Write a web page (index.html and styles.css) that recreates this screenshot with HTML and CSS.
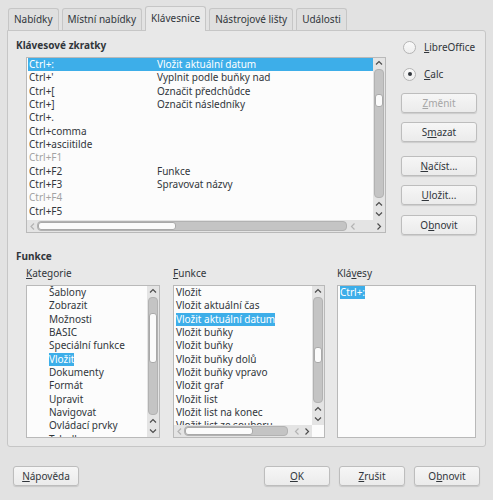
FILE: index.html
```html
<!DOCTYPE html>
<html lang="cs">
<head>
<meta charset="utf-8">
<title>Přizpůsobit</title>
<link rel="stylesheet" href="styles.css">
</head>
<body>
<div class="dialog">
  <div class="tabs">
    <div class="tab">Nabídky</div>
    <div class="tab">Místní nabídky</div>
    <div class="tab active">Klávesnice</div>
    <div class="tab">Nástrojové lišty</div>
    <div class="tab">Události</div>
  </div>
  <div class="panel">
    <div class="top">
      <div class="left">
        <div class="heading">Klávesové zkratky</div>
        <div class="list shortcuts">
          <div class="rows">
            <div class="row sel"><span class="c1">Ctrl+:</span><span>Vložit aktuální datum</span></div>
            <div class="row"><span class="c1">Ctrl+'</span><span>Vyplnit podle buňky nad</span></div>
            <div class="row"><span class="c1">Ctrl+[</span><span>Označit předchůdce</span></div>
            <div class="row"><span class="c1">Ctrl+]</span><span>Označit následníky</span></div>
            <div class="row"><span class="c1">Ctrl+.</span><span></span></div>
            <div class="row"><span class="c1">Ctrl+comma</span><span></span></div>
            <div class="row"><span class="c1">Ctrl+asciitilde</span><span></span></div>
            <div class="row dim"><span class="c1">Ctrl+F1</span><span></span></div>
            <div class="row"><span class="c1">Ctrl+F2</span><span>Funkce</span></div>
            <div class="row"><span class="c1">Ctrl+F3</span><span>Spravovat názvy</span></div>
            <div class="row dim"><span class="c1">Ctrl+F4</span><span></span></div>
            <div class="row"><span class="c1">Ctrl+F5</span><span></span></div>
            <div class="row dim"><span class="c1">Ctrl+F6</span><span></span></div>
          </div>
          <div class="vscroll">
            <svg class="arr" width="12" height="10" viewBox="0 0 12 10"><polyline points="3,6.5 6,3.5 9,6.5" /></svg>
            <div class="track"><div class="thumb" style="margin-top:24px;height:13px"></div></div>
            <svg class="arr" width="12" height="10" viewBox="0 0 12 10"><polyline points="3,6.5 6,3.5 9,6.5" /></svg>
            <svg class="arr" width="12" height="10" viewBox="0 0 12 10"><polyline points="3,3.5 6,6.5 9,3.5" /></svg>
          </div>
          <div class="hscroll">
            <svg class="arr light" width="9" height="11" viewBox="0 0 9 11"><polyline points="6,2.5 3,5.5 6,8.5" /></svg>
            <div class="htrack"><div class="hthumb" style="width:138px"></div></div>
            <svg class="arr light" width="12" height="11" viewBox="0 0 12 11"><polyline points="7.5,2.5 4.5,5.5 7.5,8.5" /></svg>
            <span class="hsp"></span>
            <svg class="arr" width="12" height="11" viewBox="0 0 12 11"><polyline points="4.5,2.5 7.5,5.5 4.5,8.5" /></svg>
          </div>
        </div>
      </div>
      <div class="right">
        <label class="radio"><span class="circle"></span><span><u>L</u>ibreOffice</span></label>
        <label class="radio second"><span class="circle on"></span><span><u>C</u>alc</span></label>
        <div class="btn disabled first"><u>Z</u>měnit</div>
        <div class="btn g9">S<u>m</u>azat</div>
        <div class="btn g14"><u>N</u>ačíst...</div>
        <div class="btn g9"><u>U</u>ložit...</div>
        <div class="btn g10">O<u>b</u>novit</div>
      </div>
    </div>

    <div class="heading fn">Funkce</div>
    <div class="cols">
      <div class="col c-cat">
        <div class="label"><u>K</u>ategorie</div>
        <div class="list small nohs">
          <div class="rows indent">
            <div class="row"><span>Šablony</span></div>
            <div class="row"><span>Zobrazit</span></div>
            <div class="row"><span>Možnosti</span></div>
            <div class="row"><span>BASIC</span></div>
            <div class="row"><span>Speciální funkce</span></div>
            <div class="row"><span class="hl">Vložit</span></div>
            <div class="row"><span>Dokumenty</span></div>
            <div class="row"><span>Formát</span></div>
            <div class="row"><span>Upravit</span></div>
            <div class="row"><span>Navigovat</span></div>
            <div class="row"><span>Ovládací prvky</span></div>
            <div class="row"><span>Tabulka</span></div>
          </div>
          <div class="vscroll">
            <svg class="arr" width="12" height="10" viewBox="0 0 12 10"><polyline points="3,6.5 6,3.5 9,6.5" /></svg>
            <div class="track"><div class="thumb" style="margin-top:15px;height:50px"></div></div>
            <svg class="arr" width="12" height="10" viewBox="0 0 12 10"><polyline points="3,6.5 6,3.5 9,6.5" /></svg>
            <svg class="arr" width="12" height="10" viewBox="0 0 12 10"><polyline points="3,3.5 6,6.5 9,3.5" /></svg>
          </div>
        </div>
      </div>
      <div class="col c-fn">
        <div class="label"><u>F</u>unkce</div>
        <div class="list small">
          <div class="rows">
            <div class="row"><span>Vložit</span></div>
            <div class="row"><span>Vložit aktuální čas</span></div>
            <div class="row"><span class="hl">Vložit aktuální datum</span></div>
            <div class="row"><span>Vložit buňky</span></div>
            <div class="row"><span>Vložit buňky</span></div>
            <div class="row"><span>Vložit buňky dolů</span></div>
            <div class="row"><span>Vložit buňky vpravo</span></div>
            <div class="row"><span>Vložit graf</span></div>
            <div class="row"><span>Vložit list</span></div>
            <div class="row"><span>Vložit list na konec</span></div>
            <div class="row"><span>Vložit list ze souboru</span></div>
          </div>
          <div class="vscroll">
            <svg class="arr" width="12" height="10" viewBox="0 0 12 10"><polyline points="3,6.5 6,3.5 9,6.5" /></svg>
            <div class="track"><div class="thumb" style="margin-top:49px;height:16px"></div></div>
            <svg class="arr" width="12" height="10" viewBox="0 0 12 10"><polyline points="3,6.5 6,3.5 9,6.5" /></svg>
            <svg class="arr" width="12" height="10" viewBox="0 0 12 10"><polyline points="3,3.5 6,6.5 9,3.5" /></svg>
          </div>
          <div class="hscroll">
            <svg class="arr light" width="9" height="11" viewBox="0 0 9 11"><polyline points="6,2.5 3,5.5 6,8.5" /></svg>
            <div class="htrack"><div class="hthumb" style="width:68px"></div></div>
            <svg class="arr light" width="10" height="11" viewBox="0 0 10 11"><polyline points="6.5,2.5 3.5,5.5 6.5,8.5" /></svg>
            <svg class="arr" width="10" height="11" viewBox="0 0 10 11"><polyline points="3.5,2.5 6.5,5.5 3.5,8.5" /></svg>
            <span class="corner"></span>
          </div>
        </div>
      </div>
      <div class="col c-keys">
        <div class="label">Klá<u>v</u>esy</div>
        <div class="list small plain">
          <div class="rows">
            <div class="row"><span class="hl">Ctrl+:</span></div>
          </div>
        </div>
      </div>
    </div>
  </div>
  <div class="footer">
    <div class="btn fbtn"><u>N</u>ápověda</div>
    <span class="spacer"></span>
    <div class="btn fbtn"><u>O</u>K</div>
    <div class="btn fbtn"><u>Z</u>rušit</div>
    <div class="btn fbtn">O<u>b</u>novit</div>
  </div>
</div>
</body>
</html>
```

FILE: styles.css
```css
* { box-sizing: border-box; }

body {
  margin: 0;
  width: 493px;
  height: 500px;
  overflow: hidden;
  background: #e2e2e2;
  font-family: "Noto Sans", "DejaVu Sans", sans-serif;
  font-size: 10px;
  color: #31363b;
}

u { text-decoration: underline; text-underline-offset: 1px; }

.dialog { padding: 6px 0 0 7px; }

/* tabs */
.tabs {
  display: flex;
  align-items: flex-end;
  height: 24px;
  margin-left: 1px;
  gap: 3px;
  position: relative;
  z-index: 1;
}
.tab {
  height: 22px;
  line-height: 21px;
  padding: 0 5px;
  border: 1px solid #c6c6c6;
  border-bottom: none;
  border-radius: 3px 3px 0 0;
  background: #dfdfdf;
  white-space: nowrap;
}
.tab.active {
  height: 25px;
  line-height: 23px;
  margin-bottom: -1px;
  background: #e8e8e8;
}

/* panel */
.panel {
  width: 479px;
  height: 417px;
  border: 1px solid #c6c6c6;
  border-radius: 0 3px 3px 3px;
  background: #e8e8e8;
  padding: 0 0 0 0;
}

.top { display: flex; }
.left { padding-left: 8px; }
.heading {
  font-weight: bold;
  line-height: 16px;
  height: 16px;
  margin-top: 6px;
  white-space: nowrap;
}
.heading.fn { margin: 13px 0 0 8px; }

/* lists */
.list {
  border: 1px solid #b9b9b9;
  background: #fcfcfc;
  display: grid;
  grid-template-columns: 1fr 12px;
  grid-template-rows: 1fr 12px;
  overflow: hidden;
}
.list.shortcuts {
  width: 360px;
  height: 176px;
  margin: 4px 0 0 10px;
}
.rows { overflow: hidden; padding-left: 1px; }
.row {
  height: 13.33px;
  line-height: 13.33px;
  display: flex;
  white-space: nowrap;
  padding-left: 1px;
}
.row .c1 { width: 128px; flex: none; }
.row.sel { background: #3daee9; color: #fff; }
.row.dim { color: #a3a3a3; }
.indent .row { padding-left: 21px; }
.hl { background: #3daee9; color: #fff; }

/* scrollbars */
.vscroll {
  display: flex;
  flex-direction: column;
  align-items: center;
  background: #e4e4e4;
  padding-bottom: 1px;
}
.arr { flex: none; fill: none; stroke: #4d4d4d; stroke-width: 1.2; }
.arr.light { stroke: #b4b4b4; }
.track {
  flex: 1;
  width: 10px;
  margin: 1px 0;
  background: #c4c4c4;
  border: 1px solid #b2b2b2;
  border-radius: 4px;
  display: flex;
  flex-direction: column;
}
.thumb {
  width: 8px;
  background: #fbfbfb;
  border: 1px solid #a9a9a9;
  border-radius: 3px;
}
.hscroll {
  grid-column: 1 / 3;
  display: flex;
  align-items: center;
  background: #e4e4e4;
  padding-left: 1px;
}
.htrack {
  flex: 1;
  height: 10px;
  background: #c4c4c4;
  border: 1px solid #b2b2b2;
  border-radius: 4px;
  display: flex;
}
.hthumb {
  height: 8px;
  background: #fbfbfb;
  border: 1px solid #a9a9a9;
  border-radius: 3px;
}
.hsp { width: 14px; flex: none; }
.corner { width: 12px; flex: none; align-self: stretch; background: #fcfcfc; }

/* right column */
.right {
  width: 76px;
  margin-left: 15px;
  padding-top: 8px;
  display: flex;
  flex-direction: column;
}
.radio {
  display: flex;
  align-items: center;
  height: 16px;
  margin-left: 2px;
  white-space: nowrap;
}
.radio.second { margin-top: 11px; }
.circle {
  width: 13px;
  height: 13px;
  border-radius: 50%;
  border: 1px solid #b5b5b5;
  background: linear-gradient(#fafafa, #eeeeee);
  margin-right: 8px;
  display: flex;
  align-items: center;
  justify-content: center;
  flex: none;
}
.circle.on::after {
  content: "";
  width: 4px;
  height: 4px;
  border-radius: 50%;
  background: #31363b;
}

.btn {
  height: 20px;
  line-height: 18px;
  text-align: center;
  border: 1px solid #bdbdbd;
  border-radius: 3px;
  background: linear-gradient(#f6f6f6, #ebebeb);
  box-shadow: 0 1px 1px rgba(0, 0, 0, 0.12);
  white-space: nowrap;
}
.btn.disabled { color: #a6a6a6; }
.btn.first { margin-top: 11px; }
.g9 { margin-top: 9px; }
.g10 { margin-top: 10px; }
.g14 { margin-top: 14px; }

/* bottom columns */
.cols {
  display: flex;
  padding-left: 18px;
}
.col { display: flex; flex-direction: column; }
.c-cat { width: 134px; }
.c-fn { width: 152px; margin-left: 13px; }
.c-keys { width: 139px; margin-left: 12px; }
.label { line-height: 16px; height: 16px; margin-top: 1px; white-space: nowrap; }
.list.small { height: 153px; margin-top: 4px; }
.list.nohs { grid-template-rows: 1fr; }
.list.plain { display: block; }
.list.small .rows { padding-top: 0; }
.c-fn .hscroll .htrack { margin-right: 4px; }

/* footer */
.footer {
  display: flex;
  gap: 9px;
  margin-top: 19px;
  padding: 0 13px 0 6px;
}
.spacer { flex: 1; }
.fbtn { width: 66px; height: 20px; }
```
